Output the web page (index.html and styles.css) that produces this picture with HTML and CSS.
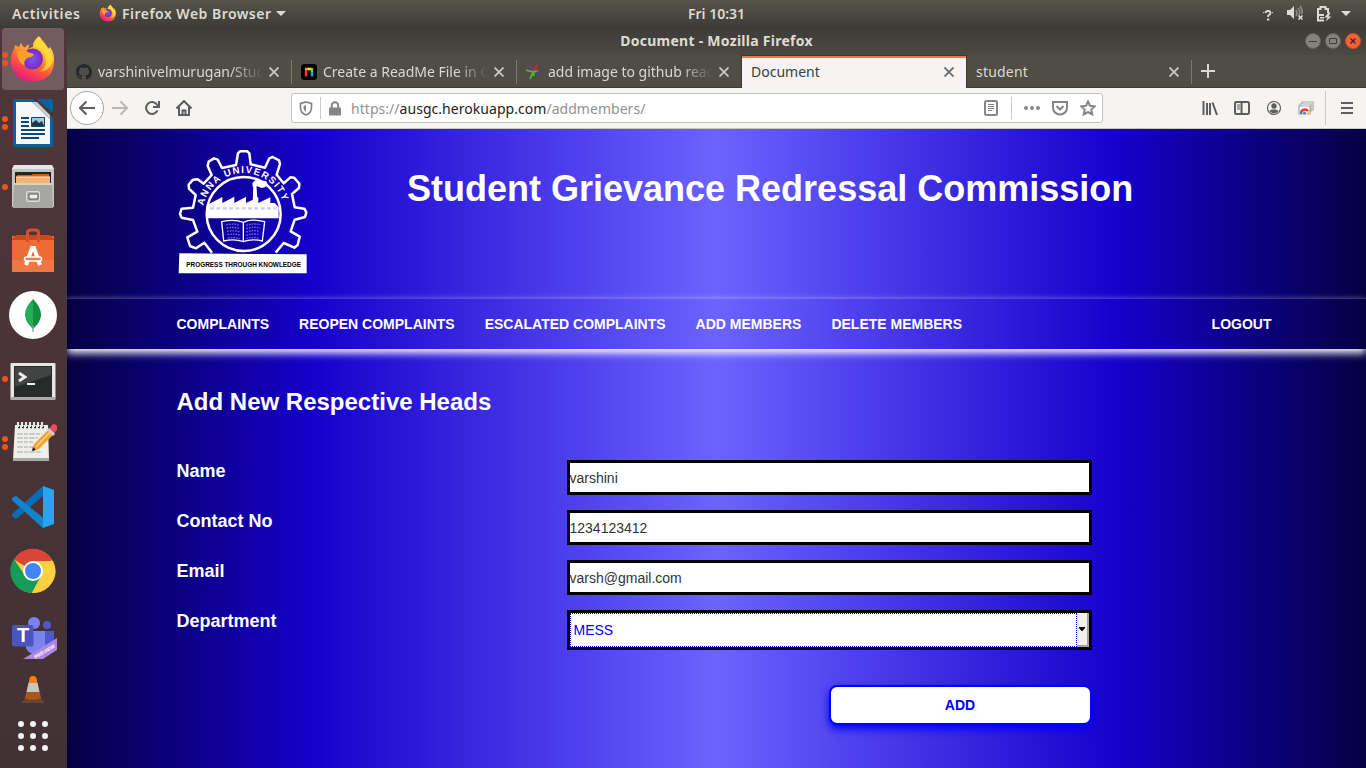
FILE: index.html
```html
<!DOCTYPE html>
<html lang="en">
<head>
<meta charset="utf-8">
<title>Document</title>
<link rel="stylesheet" href="styles.css">
</head>
<body>
<header class="panel">
  <span class="activities">Activities</span>
  <div class="app-menu">
    <svg width="18" height="18" viewBox="0 0 48 48"><use href="#firefox"/></svg>
    <span class="app-name">Firefox Web Browser</span>
    <svg class="caret" width="10" height="5" viewBox="0 0 10 5"><path d="M0 0h10L5 5z"/></svg>
  </div>
  <span class="clock">Fri 10:31</span>
  <div class="tray">
    <svg class="help" width="12" height="12" viewBox="0 0 12 12"><path d="M3.500 4Q3.500 2 6 2T8.500 4Q8.500 5.500 6.200 6.500V8" fill="none" stroke="#dedbd5" stroke-width="1.800"/><path d="M5 9.500h2.300v2H5zM1 3h1v1H1zM10 3h1v1h-1z" fill="#dedbd5"/></svg>
    <svg class="sound" width="18" height="16" viewBox="0 0 18 16"><path d="M1 5h3l4-4v13l-4-4H1z" fill="#dedbd5"/><path d="M10 5q2 3 0 6M12 3q3 4 1 7M14 1q3 4 2 8" fill="none" stroke="#8c8982" stroke-width="1.600"/><path d="M12.500 10.500l4 4m0-4l-4 4" stroke="#dedbd5" stroke-width="1.700"/></svg>
    <svg class="battery" width="16" height="17" viewBox="0 0 16 17"><path d="M8 15.500H2V4h2.500V2h5v2H12v4M3 10h5" fill="none" stroke="#dedbd5" stroke-width="2"/><path d="M4 12h4v1.500H4zM12.500 7.500l-4 5h3l-2 4 6-5h-3l2-4z" fill="#dedbd5"/></svg>
    <svg class="caret" width="10" height="5" viewBox="0 0 10 5"><path d="M0 0h10L5 5z"/></svg>
  </div>
</header>

<div class="desktop">
<aside class="dock">
  <div class="slot focused"><i class="dots two"></i>
    <svg width="48" height="48" viewBox="0 0 48 48">
      <defs>
        <linearGradient id="flame" x1=".8" y1="0" x2=".3" y2="1"><stop offset="0" stop-color="#fff44f"/><stop offset=".35" stop-color="#ffb52b"/><stop offset=".65" stop-color="#ff5a35"/><stop offset="1" stop-color="#e3158a"/></linearGradient>
        <radialGradient id="globe"><stop offset="0" stop-color="#7a55ee"/><stop offset="1" stop-color="#7b29c4"/></radialGradient>
        <g id="firefox">
          <path d="M5 14l1-4 4 2 2-4q1 3 4 4.500 2-2.500 4-3l-1 5Q21 12 24 12q-1-5 6-11 2 5 6 8 2 2 3 5l2-2q5 7 4 15Q44 46 24 46.500 3 46 1.500 25 2 19 5 14z" fill="url(#flame)"/>
          <circle cx="23.500" cy="24" r="10.500" fill="url(#globe)"/>
          <path d="M8 17q8-3 13 1 3 0 4 2-3 3-7 3-4 3-2 8-6-3-7-9z" fill="#ffa12b"/>
          <path d="M25 12q11 1 12 14 0 8-7 11 13-2 14-14Q41 14 31 2q-4 5-6 10z" fill="#ffe03e" opacity=".75"/>
        </g>
      </defs>
      <use href="#firefox"/>
    </svg>
  </div>
  <div class="slot"><i class="dots two"></i>
    <svg width="48" height="48" viewBox="0 0 48 48"><path d="M4 2q0-2 2-2h18l20 19v27q0 2-2 2H6q-2 0-2-2z" fill="#0c619d"/><path d="M28 0h14q2 0 2 2v11q-1 0-3-2L29 2q-1-1-1-2z" fill="#0763a0"/><path d="M24 0h3l17 15v4z" fill="#4a3539"/><path d="M7 3h16l18 17v25H7z" fill="#f7f7f7"/><path d="M23 3h5l13 13v4z" fill="#c9cdd0"/><path d="M12 19h8M12 23h8M12 27h8M12 31h24M12 35h24M12 39h18" stroke="#0a4a72" stroke-width="2"/><path d="M22.500 18.500h13v9h-13z" fill="#8ecbf3" stroke="#0a4a72"/><path d="M23 27v-3l4-3 3 3 3-2 2 5z" fill="#27343b"/><circle cx="33" cy="20.500" r="1.300" fill="#ffc94a"/></svg>
  </div>
  <div class="slot"><i class="dots"></i>
    <svg width="48" height="48" viewBox="0 0 48 48"><path d="M5 2h38l2 4v38H3V6z" fill="#c5c5c3"/><path d="M5 2h38l2 4H3z" fill="#e6e6e4"/><path d="M6 9h36v11H6z" fill="#26221f"/><path d="M8 12h14l2-1h16v8H7z" fill="#d55f17"/><path d="M7 14h34v6H7z" fill="#f4b56f"/><path d="M7 14h34" stroke="#fff0d8"/><path d="M5 20h38l1 25H4z" fill="#a6a6a4"/><path d="M5 20h38v2H5z" fill="#d2d2d0"/><rect x="17.500" y="28.500" width="13" height="10" rx="1.500" fill="#b3b3b1" stroke="#dcdcda"/><path d="M20 31h9v5h-9z" fill="#eee" stroke="#555"/></svg>
  </div>
  <div class="slot">
    <svg width="48" height="48" viewBox="0 0 48 48"><path d="M3 9h42v36H3z" fill="#ed6b34"/><path d="M3 12l4-4h34l4 4v1H3z" fill="#c74a1e"/><path d="M18.500 15V6q0-3 3-3h5q3 0 3 3v9" fill="none" stroke="#d95026" stroke-width="3"/><path d="M3 33h42v12H3z" fill="#f18451" opacity=".5"/><path d="M17 38l6-17h2l6 17" fill="none" stroke="#fff" stroke-width="4"/><rect x="15.500" y="30" width="17" height="4" rx="2" fill="#f08040" stroke="#fff" stroke-width="1.500"/></svg>
  </div>
  <div class="slot">
    <svg width="48" height="48" viewBox="0 0 48 48"><circle cx="24" cy="24" r="24" fill="#fff"/><path d="M24 8Q8 24 24 38z" fill="#21af55"/><path d="M24 8q16 16 0 30z" fill="#138d42"/><path d="M24 34v7" stroke="#8b9b8d" stroke-width="1.300"/></svg>
  </div>
  <div class="slot"><i class="dots"></i>
    <svg width="48" height="48" viewBox="0 0 48 48"><rect x="1.500" y="8" width="45" height="37" rx="1" fill="#e6e6e4"/><path d="M2 42h44v3H2z" fill="#aaa"/><path d="M5 11h38v31H5z" fill="#292b2a"/><path d="M6 12h36v8L6 32z" fill="#424443"/><path d="M10 18l6 4-6 4" fill="none" stroke="#eee" stroke-width="2.800"/><path d="M18 29h8" stroke="#eee" stroke-width="2"/></svg>
  </div>
  <div class="slot"><i class="dots two"></i>
    <svg width="48" height="48" viewBox="0 0 48 48"><path d="M6 6h33l1 35H4z" fill="#eeeeea"/><path d="M4 39h36v3H4z" fill="#aaa"/><path d="M9 8h27" stroke="#333" stroke-width="2.500" stroke-dasharray="2 2"/><path d="M9 3v5M13 3v5M17 3v5M21 3v5M25 3v5M29 3v5M33 3v5" stroke="#e7e7e7" stroke-width="2.200"/><path d="M8 15h25M8 19h21M8 23h16M8 28h18M8 33h25" stroke="#aaa" stroke-dasharray="6 1 4 1"/><path d="M23 32l2-7L41 9l5 5-16 16z" fill="#f6a332"/><path d="M27 28L43 11" stroke="#ffd38b" stroke-width="1.500"/><path d="M40 10l4-5q5 0 5 5l-4 4z" fill="#ec4c52"/><path d="M40 9l6 6-2 2-6-6z" fill="#ccc"/><path d="M23 32l1-4 3 3z" fill="#222"/></svg>
  </div>
  <div class="slot">
    <svg width="48" height="48" viewBox="0 0 48 48"><path d="M7 13l27 22v10L3 17v-2z" fill="#1383cc"/><path d="M7 36L34 13V3L3 31v2z" fill="#086db5"/><path d="M7 13l27 22v10L3 17v-2z" fill="#1383cc"/><path d="M34 3l11 4v34l-11 4z" fill="#29a4ee"/></svg>
  </div>
  <div class="slot">
    <svg width="48" height="48" viewBox="0 0 48 48"><circle cx="24" cy="24" r="22" fill="#ffcf42"/><path d="M24 24L5 12.500A22 22 0 0 1 43 13z" fill="#db4437"/><path d="M24 24l-5 9-14-21A22 22 0 0 0 23 46l9-17z" fill="#139d58"/><path d="M24 14h20A22 22 0 0 1 23 46l9-17z" fill="#ffcf42"/><circle cx="24" cy="24" r="10" fill="#fff"/><circle cx="24" cy="24" r="8" fill="#4285f4"/></svg>
  </div>
  <div class="slot teams">
    <svg width="48" height="48" viewBox="0 0 48 48"><circle cx="25" cy="10" r="6" fill="#7b83eb"/><circle cx="38" cy="12" r="4" fill="#5059c9"/><path d="M28 18h17v11q-1 8-10 8h-7z" fill="#5059c9"/><path d="M16 18h20v14q-2 9-10 9t-10-9z" fill="#7b83eb"/><rect x="3" y="12" width="21.500" height="21.500" rx="2" fill="#4b53bc"/><text x="8" y="29" class="teams-letter">T</text><path d="M14 46L48 25v12L34 46z" fill="#b184df"/><text class="ribbon" text-anchor="middle" transform="translate(36.500 40) rotate(-31)">PREVIEW</text></svg>
  </div>
  <div class="slot small">
    <svg width="22" height="28" viewBox="0 0 22 28"><path d="M3 21h16l2 5H1z" fill="#7b3e14"/><path d="M8 1q3-2 6 0l5 21q-8 4-16 0z" fill="#a8571d"/><path d="M6.500 7h9l2 9h-13z" fill="#c5c6c2"/><path d="M8 1q3-2 6 0l1.500 6h-9z" fill="#f77d0d"/><path d="M0 26h22" stroke="#5d4844" stroke-width="2"/></svg>
  </div>
  <div class="apps"><i></i><i></i><i></i><i></i><i></i><i></i><i></i><i></i><i></i></div>
</aside>

<main class="window">
  <div class="titlebar">
    <span class="win-title">Document - Mozilla Firefox</span>
    <div class="win-buttons">
      <svg width="16" height="16" viewBox="0 0 16 16"><circle cx="8" cy="8" r="7.500" fill="#85827b" stroke="#65625b"/><path d="M4 8.500h8" stroke="#3f3d38"/></svg>
      <svg width="16" height="16" viewBox="0 0 16 16"><circle cx="8" cy="8" r="7.500" fill="#85827b" stroke="#65625b"/><path d="M4.500 5.500h7v5h-7z" fill="none" stroke="#3f3d38"/></svg>
      <svg width="16" height="16" viewBox="0 0 16 16"><circle cx="8" cy="8" r="7.500" fill="#f0633a" stroke="#d84c23"/><path d="M5.500 5.500l5 5m0-5l-5 5" stroke="#50200f" stroke-width="1.400"/></svg>
    </div>
  </div>

  <div class="tabs">
    <div class="tab">
      <svg width="16" height="16" viewBox="0 0 16 16"><path fill="#24292e" d="M8 0C3.580 0 0 3.580 0 8c0 3.540 2.290 6.530 5.470 7.590.4.070.55-.17.55-.38V13.700c-2.230.48-2.690-.95-2.690-.95-.36-.92-.9-1.170-.9-1.170-.72-.5.060-.5.060-.5.800.060 1.220.83 1.220.83.720 1.210 1.870.87 2.330.66.070-.52.280-.87.500-1.070-1.780-.2-3.640-.89-3.640-3.950 0-.87.310-1.590.82-2.150-.08-.2-.36-1.020.08-2.120 0 0 .67-.21 2.200.82a7.600 7.600 0 0 1 4 0c1.530-1.040 2.200-.82 2.200-.82.440 1.100.16 1.920.08 2.120.51.56.82 1.270.82 2.150 0 3.070-1.870 3.750-3.650 3.950.29.25.54.73.54 1.480v2.200c0 .21.150.46.550.38A8 8 0 0 0 16 8c0-4.420-3.580-8-8-8z"/></svg>
      <span class="label fade">varshinivelmurugan/Stud</span><svg class="x" width="10" height="10" viewBox="0 0 10 10"><path d="M.5.500l9 9m0-9l-9 9"/></svg>
    </div>
    <div class="tab">
      <svg width="16" height="16" viewBox="0 0 16 16"><rect width="16" height="16" rx="3.500" fill="#000"/><path d="M5 12.500V4" stroke="#f33" stroke-width="2.400"/><path d="M4 5h4" stroke="#ff9d00" stroke-width="2.500"/><path d="M7 5h4" stroke="#ffe900" stroke-width="2.500"/><path d="M11 4v4.500" stroke="#69dd22" stroke-width="2.400"/><path d="M11 8v4.500" stroke="#18a9d8" stroke-width="2.400"/></svg>
      <span class="label fade">Create a ReadMe File in G</span><svg class="x" width="10" height="10" viewBox="0 0 10 10"><path d="M.5.500l9 9m0-9l-9 9"/></svg>
    </div>
    <div class="tab">
      <svg width="16" height="16" viewBox="0 0 16 16"><path d="M7 8l4-7" stroke="#e21b3c" stroke-width="1.800"/><path d="M7 8L4 1" stroke="#873088" stroke-width="1.500"/><path d="M7 8L0 6M7 8l-3 7M7 8l1 4M7 8l5-1" stroke="#48bd28" stroke-width="1.800"/><path d="M10 8l6 2" stroke="#663399" stroke-width="1.600"/></svg>
      <span class="label fade">add image to github read</span><svg class="x" width="10" height="10" viewBox="0 0 10 10"><path d="M.5.500l9 9m0-9l-9 9"/></svg>
    </div>
    <div class="tab active"><span class="label">Document</span><svg class="x" width="10" height="10" viewBox="0 0 10 10"><path d="M.5.500l9 9m0-9l-9 9"/></svg></div>
    <div class="tab last"><span class="label wide">student</span><svg class="x" width="10" height="10" viewBox="0 0 10 10"><path d="M.5.500l9 9m0-9l-9 9"/></svg></div>
    <svg class="plus" width="14" height="14" viewBox="0 0 14 14"><path d="M7 0v14M0 7h14"/></svg>
  </div>

  <div class="toolbar">
    <div class="nav-buttons">
      <span class="back"><svg width="16" height="16" viewBox="0 0 16 16"><path d="M16 8H1M7.500 1.500L1 8l6.500 6.500"/></svg></span>
      <svg class="faded" width="16" height="16" viewBox="0 0 16 16"><path d="M0 8h15M8.500 1.500L15 8l-6.500 6.500"/></svg>
      <svg width="16" height="16" viewBox="0 0 16 16"><path d="M13.500 10.500A6 6 0 1 1 13 4.500l1.500 2M15 1v6H9"/></svg>
      <svg width="16" height="16" viewBox="0 0 16 16"><path d="M.5 8.500L8 1l7.500 7.500M3 7v8h10V7M6.500 15v-4.500h3V15"/></svg>
    </div>
    <div class="urlbar">
      <svg width="14" height="15" viewBox="0 0 14 15"><path d="M7 1l5.500 1.500v4Q12.500 12 7 14 1.500 12 1.500 6.500v-4z" stroke-width="1.700"/><path d="M7 4L4.500 5v2Q4.500 9.500 7 11z" fill="#858585" stroke="none"/></svg>
      <i class="rule"></i>
      <svg class="lock" width="14" height="15" viewBox="0 0 14 15"><rect x="1" y="6.500" width="12" height="8" rx="1" fill="#858585" stroke="none"/><path d="M3.800 7V4.500a3.200 3.200 0 0 1 6.400 0V7"/></svg>
      <span class="url">https://<b>ausgc.herokuapp.com</b>/addmembers/</span>
      <svg class="reader" width="16" height="16" viewBox="0 0 16 16"><rect x="2" y="1" width="12" height="14" rx="1.500"/><path d="M5 4.500h6M5 6.500h6M5 8.500h6M5 10.500h4" stroke-width="1"/></svg>
      <i class="rule tall"></i>
      <svg width="16" height="16" viewBox="0 0 16 16"><path d="M0 8a2 2 0 1 1 4 0 2 2 0 1 1-4 0zM6 8a2 2 0 1 1 4 0 2 2 0 1 1-4 0zM12 8a2 2 0 1 1 4 0 2 2 0 1 1-4 0z" fill="#858585" stroke="none"/></svg>
      <svg class="pocket" width="16" height="16" viewBox="0 0 16 16"><path d="M1 2h14v5.500a7 7 0 0 1-14 0zM4.500 6L8 9.500 11.500 6"/></svg>
      <svg class="star" width="16" height="16" viewBox="0 0 16 16"><path d="M8 1.500l2 4.300 4.800.5-3.600 3.200 1 4.800L8 12l-4.200 2.300 1-4.800L1.200 6.300 6 5.800z"/></svg>
    </div>
    <div class="tools">
      <svg width="16" height="16" viewBox="0 0 16 16"><path d="M1.500 1v14M5 3v12M8 3v12M10.500 2.500L15 15"/></svg>
      <svg width="16" height="16" viewBox="0 0 16 16"><rect x="1" y="2" width="14" height="12" rx="1.500"/><path d="M7.500 2v12"/><path d="M3 5h3M3 7h3M3 9h3" stroke-width="1"/></svg>
      <svg width="16" height="16" viewBox="0 0 16 16"><circle cx="8" cy="8" r="6.500" stroke-width="1.200"/><circle cx="8" cy="6" r="2.700" fill="#5d5d5d" stroke="none"/><path d="M3.500 11q1-1.500 3-1.500h3q2 0 3 1.500-2 2.500-4.500 2.500T3.500 11z" fill="#5d5d5d" stroke="none"/></svg>
      <svg width="16" height="16" viewBox="0 0 16 16"><path d="M4 5V2h11v8h-3" stroke="#aaa" stroke-width="1.200"/><path d="M2 6V4h11v7h-2M1 14V6h11v8z" fill="#fff" stroke="#aaa" stroke-width="1.200"/><path d="M3 13a4 4 0 0 1 7-2" stroke="#e53b32" stroke-width="2.500"/><path d="M3 14v-2" stroke="#1ba261" stroke-width="2"/><path d="M10 14v-3" stroke="#ffc83d" stroke-width="2"/><circle cx="6.500" cy="13" r="1.500" fill="#4285f4" stroke="none"/></svg>
      <i class="rule full"></i>
      <svg class="menu" width="12" height="12" viewBox="0 0 12 12"><path d="M0 1h12M0 6h12M0 11h12"/></svg>
    </div>
  </div>

  <section class="page">
    <div class="banner">
      <svg class="crest" width="130" height="130" viewBox="0 0 130 130">
        <g transform="scale(.33333) translate(-39 -24)">
          <path class="gear" d="M141 338L118 308 93 325 75 318 67 292 97 275 84 240 50 233 45 222 50 206 84 203 92 165 72 146 71 134 84 119 98 118 116 131 140 105 128 78 131 65 147 55 158 59 171 84 213 75 219 40 225 34 247 34 253 40 257 73 300 83 313 55 323 51 342 61 345 72 335 104 356 130 376 112 387 113 403 131 402 144 381 162 389 202 418 206 424 217 420 231 389 239 377 274 404 290 398 315 388 323 356 309 332 338"/>
          <circle class="gear" cx="236" cy="222" r="111"/>
          <path d="M126 235v-35l10-10 36-19v18l36-19v19l35-19v19l37-18v18l36-17v17h13l12 12v34z" fill="#fff"/>
          <path d="M263 190l2-57h9l4 57z" fill="#fff"/>
          <path d="M262 130q7-15 26-7 18-4 19 8-1 11-17 13l-13-5-14 1z" fill="#fff"/>
          <path d="M135 205h200" stroke="#cfcbee" stroke-width="7" stroke-dasharray="12 7"/>
          <path d="M170 245q38-9 65 2 22-12 64-2l-7 58q-32-8-57 2-27-10-59-2zM235 247v57" fill="none" stroke="#fff" stroke-width="4"/>
          <path d="M184 254q25-4 40 2M185 264q25-4 40 2M186 274q25-4 40 2M187 284q25-4 38 2M189 294q20-3 36 2M244 256q20-7 42-2M244 266q20-7 41-2M244 276q20-7 40-2M244 286q20-7 38-2M244 296q18-6 36-2" fill="none" stroke="#7068dc" stroke-width="4" stroke-dasharray="5 3"/>
          <path id="ring" d="M115 200A123 123 0 0 1 357 200" fill="none"/>
          <text class="ring-text"><textPath href="#ring" startOffset="3">ANNA UNIVERSITY</textPath></text>
          <path d="M43 340l382 3v57H41z" fill="#fff"/>
          <text class="motto" x="64" y="380" textLength="344" lengthAdjust="spacingAndGlyphs">PROGRESS THROUGH KNOWLEDGE</text>
        </g>
      </svg>
      <h1>Student Grievance Redressal Commission</h1>
    </div>
    <nav class="menu-bar">
      <a>COMPLAINTS</a><a>REOPEN COMPLAINTS</a><a>ESCALATED COMPLAINTS</a><a>ADD MEMBERS</a><a>DELETE MEMBERS</a><a class="logout">LOGOUT</a>
    </nav>
    <form class="form">
      <h2>Add New Respective Heads</h2>
      <div class="row"><label>Name</label><div class="field">varshini</div></div>
      <div class="row"><label>Contact No</label><div class="field">1234123412</div></div>
      <div class="row"><label>Email</label><div class="field">varsh@gmail.com</div></div>
      <div class="row"><label>Department</label><div class="field select"><span>MESS</span><i><svg width="6" height="4" viewBox="0 0 6 4"><path d="M0 0h6v1L3.500 4h-1L0 1z"/></svg></i></div></div>
      <div class="submit">ADD</div>
    </form>
  </section>
</main>
</div>
</body>
</html>
```
FILE: styles.css
```css
* { box-sizing: border-box; }
body {
  margin: 0; width: 1366px; height: 768px; overflow: hidden;
  display: flex; flex-direction: column;
  font-family: "Noto Sans", "Open Sans", sans-serif; font-size: 14px;
}
svg { display: block; flex: none; }
.panel {
  height: 28px; flex: none; display: grid; grid-template-columns: 88px 600px 1fr;
  align-items: center; padding-bottom: 2px;
  background: linear-gradient(#57544c, #3c3b37); color: #dfdbd2; font-weight: 600;
}
.panel { grid-template-columns: 88px 600px 60px 1fr; }
.activities { padding-left: 12px; letter-spacing: .6px; }
.app-menu { display: flex; align-items: center; padding-left: 11px; gap: 5px; }
.app-name { letter-spacing: .48px; }
.caret { fill: #dfdbd2; }
.clock { white-space: nowrap; }
.tray { justify-self: end; display: flex; align-items: center; padding-right: 15px; }
.help { margin-top: 3px; }
.sound { margin-left: 12px; }
.battery { margin: 0 9px 0 12px; }
.desktop { flex: 1; display: flex; min-height: 0; }

.dock {
  width: 67px; flex: none; display: flex; flex-direction: column; gap: 2px; padding-left: 2px;
  background: linear-gradient(#50363b, #423135);
}
.slot { position: relative; width: 62px; height: 62px; display: grid; place-items: center; flex: none; }
.focused { background: #735b60; border-radius: 4px; }
.dots { position: absolute; left: 0; top: 28px; width: 6px; height: 6px; border-radius: 50%; background: #e95420; }
.dots.two { top: 24px; box-shadow: 0 8px #e95420; }
.teams { padding-top: 3px; }
.small { height: 44px; }
.teams-letter { font: bold 20px "Liberation Sans", sans-serif; fill: #fff; }
.ribbon { font: bold 5px "Liberation Sans", sans-serif; fill: #fff; }
.apps { display: grid; grid-template-columns: repeat(3, 6px); gap: 6px; margin: 7px 0 0 16px; }
.apps i { width: 6px; height: 6px; border-radius: 50%; background: #f2f2f2; }

.window { flex: 1; display: flex; flex-direction: column; min-width: 0; }
.titlebar {
  height: 27px; flex: none; display: grid; grid-template-columns: 1fr auto 1fr; align-items: center;
  background: linear-gradient(#3d3c37, #4c4942); color: #dfdbd2; font-weight: 700; padding-bottom: 2px;
}
.win-title { grid-column: 2; letter-spacing: .27px; }
.win-buttons { display: flex; gap: 4px; justify-self: end; padding-right: 5px; }
.tabs { height: 33px; flex: none; display: flex; background: #504d45; border-bottom: 1px solid #3b3934; }
.tab {
  width: 225px; flex: none; display: flex; align-items: center; gap: 6px; padding: 2px 12px 0 9px;
  color: #dcd8cf; position: relative; border-right: 1px solid transparent;
}
.tab:nth-child(-n+2)::after, .last::after {
  content: ""; position: absolute; right: -1px; top: 5px; width: 1px; height: 24px; background: #7b7871;
}
.label { flex: 1; overflow: hidden; white-space: nowrap; line-height: 24px; }
.fade { -webkit-mask-image: linear-gradient(90deg, #000 80%, transparent); mask-image: linear-gradient(90deg, #000 80%, transparent); }
.wide { letter-spacing: .2px; }
.x { fill: none; stroke: #cbc7bf; stroke-width: 1.800; }
.active {
  background: #f5f4f2; color: #3c3c3c; border: 1px solid #3b3934; border-bottom: 0; padding-top: 0;
  box-shadow: inset 0 2px #f0764c; height: 33px; margin-left: -1px; width: 226px;
}
.active .x { stroke: #6b6b6b; }
.plus { margin: 9px 0 0 9px; fill: none; stroke: #dcd8cf; stroke-width: 2; }

.toolbar {
  height: 41px; flex: none; display: flex; align-items: center; background: #f5f4f2;
  border-bottom: 1px solid #c9c7c4; padding: 0 13px 0 3px;
}
.toolbar svg { fill: none; stroke: #5d5d5d; stroke-width: 2; }
.nav-buttons { display: flex; align-items: center; gap: 16px; width: 221px; }
.back { width: 34px; height: 34px; border: 1px solid #aaa8a5; border-radius: 50%; background: #fff; display: grid; place-items: center; margin-right: -8px; }
.toolbar .faded { stroke: #bab9b7; }
.urlbar {
  width: 812px; height: 30px; flex: none; display: flex; align-items: center;
  background: #fff; border: 1px solid #c5c3c0; border-radius: 3px; padding: 0 6px 0 7px;
}
.urlbar svg { stroke: #858585; }
.rule { width: 1px; height: 22px; background: #c9c9c9; margin: 0 8px 0 7px; }
.toolbar .lock { margin-left: -1px; }
.url { color: #929292; flex: 1; padding-left: 9px; white-space: nowrap; letter-spacing: .04px; }
.url b { font-weight: 400; color: #222; }
.rule.tall { margin: 0 12px; }
.pocket, .star { margin-left: 12px; }
.tools { display: flex; align-items: center; gap: 16px; margin-left: auto; }
.rule.full { height: 34px; margin: 0 -1px 0 -5px; }

.page {
  flex: 1; overflow: hidden; color: #fff; font-family: "Liberation Sans", Arial, sans-serif;
  background: linear-gradient(90deg, #040042, #1500cb 18.800%, #6c63ff 50%, #1500cb 81%, #040042);
}
.banner { height: 169px; padding: 17px 0 0 111px; display: flex; gap: 99px; }
h1 { margin: 23px 0 0; font-size: 36px; line-height: 40px; font-weight: 700; white-space: nowrap; }
.crest { margin-top: 2px; }
.gear { fill: none; stroke: #fff; stroke-width: 7.500; stroke-linejoin: round; }
.ring-text { font: bold 29px "Liberation Sans", Arial, sans-serif; fill: #fff; letter-spacing: 4px; }
.motto { font: bold 24px "Liberation Sans", Arial, sans-serif; fill: #000; }
.menu-bar {
  height: 51px; display: flex; align-items: center; gap: 30px; padding: 0 94.500px 0 109.500px;
  font-size: 14px; font-weight: 700; box-shadow: 0 4px 8px #fff;
  border-top: 1px solid rgba(255, 255, 255, .18);
  background: linear-gradient(90deg, #040042, #1500cb 18.800%, #6c63ff 50%, #1500cb 81%, #040042);
}
.logout { margin-left: auto; }
.form { padding: 37px 0 0 109.500px; width: 1025px; }
h2 { margin: 0 0 42px; font-size: 24px; line-height: 32px; }
.row { display: grid; grid-template-columns: 390px 525px; margin-bottom: 15px; }
label { font-size: 18px; line-height: 22px; font-weight: 700; }
.field { height: 35px; border: 3px solid #000; background: #fff; color: #333; font-size: 14px; line-height: 30px; }
.select { height: 40px; display: flex; color: #00f; line-height: 33px; }
.select span { flex: 1; border: 1px dotted #00f; padding-left: 3px; line-height: 32px; }
.select i { width: 12px; background: #f1f0ee; border-right: 2px solid #a5a3a0; border-bottom: 2px solid #a5a3a0; display: grid; place-items: center; }
.submit {
  margin: 35px 0 0 652px; width: 263px; height: 40px; border: 2px solid #00f; border-radius: 8px;
  background: #fff; color: #00f; font-size: 14px; font-weight: 700; text-align: center; line-height: 36px;
  box-shadow: 0 4px 8px #00f;
}
```
